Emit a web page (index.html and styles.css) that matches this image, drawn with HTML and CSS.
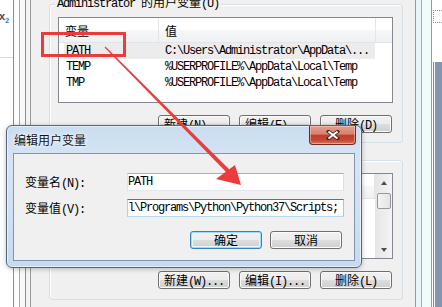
FILE: index.html
```html
<!DOCTYPE html>
<html lang="zh-CN">
<head>
  <meta charset="UTF-8">
  <title>环境变量</title>
  <link rel="stylesheet" href="styles.css">
</head>
<body>

<div class="desk">
  <div class="side-app">
    <div class="side-tool"><span class="sub-x">x<sub>2</sub></span></div>
  </div>
  <div class="frame-left"></div>

  <div class="window">
    <div class="group group-user">
      <span class="group-title"><span class="m">Administrator </span>的用户变量<span class="m">(U)</span></span>
      <div class="listbox">
        <div class="lv-head">
          <div class="lv-col c1">变量</div>
          <div class="lv-col c2">值</div>
          <div class="lv-col c3"></div>
        </div>
        <div class="lv-row sel"><span class="c1 m">PATH</span><span class="c2 m">C:\Users\Administrator\AppData\...</span></div>
        <div class="lv-row"><span class="c1 m">TEMP</span><span class="c2 m">%USERPROFILE%\AppData\Local\Temp</span></div>
        <div class="lv-row"><span class="c1 m">TMP</span><span class="c2 m">%USERPROFILE%\AppData\Local\Temp</span></div>
      </div>
      <div class="btn-row">
        <button class="btn">新建<span class="m">(N)...</span></button>
        <button class="btn">编辑<span class="m">(E)...</span></button>
        <button class="btn">删除<span class="m">(D)</span></button>
      </div>
    </div>

    <!-- system variables: title and list text sit behind the dialog -->
    <div class="group group-sys">
      <div class="listbox">
        <div class="lv-wrap">
          <div class="lv-main">
            <div class="lv-head">
              <div class="lv-col c1"></div>
              <div class="lv-col c2"></div>
            </div>
          </div>
          <div class="vscroll">
            <div class="sb-btn"><span class="tri up"></span></div>
            <div class="sb-thumb"></div>
            <div class="sb-track"></div>
            <div class="sb-btn"><span class="tri down"></span></div>
          </div>
        </div>
      </div>
      <div class="btn-row">
        <button class="btn">新建<span class="m">(W)...</span></button>
        <button class="btn">编辑<span class="m">(I)...</span></button>
        <button class="btn">删除<span class="m">(L)</span></button>
      </div>
    </div>
  </div>

  <div class="frame-right">
    <div class="fr-glass"></div>
    <div class="fr-other">
      <div class="dots"></div>
      <div class="blue-block"></div>
    </div>
  </div>
</div>

<div class="dialog">
  <div class="dlg-title">
    <span class="dlg-caption">编辑用户变量</span>
    <button class="close">
      <svg width="14" height="10" viewBox="0 0 14 10">
        <path d="M2.5 1.5 L11.5 8.5 M11.5 1.5 L2.5 8.5" stroke="#4a2420" stroke-width="3.6" stroke-linecap="square"/>
        <path d="M2.5 1.5 L11.5 8.5 M11.5 1.5 L2.5 8.5" stroke="#fff" stroke-width="2"/>
      </svg>
    </button>
  </div>
  <div class="dlg-client">
    <div class="field">
      <label>变量名<span class="m">(N):</span></label>
      <div class="input m">PATH</div>
    </div>
    <div class="field">
      <label>变量值<span class="m">(V):</span></label>
      <div class="input focus m">l\Programs\Python\Python37\Scripts;</div>
    </div>
    <div class="dlg-btns">
      <button class="btn default">确定</button>
      <button class="btn">取消</button>
    </div>
  </div>
</div>

<svg class="annot" width="442" height="307" viewBox="0 0 442 307">
  <rect x="42.5" y="33.5" width="82" height="22" fill="none" stroke="#ec3b3b" stroke-width="3"/>
  <polygon points="104.6,47.4 105.4,46.6 229.4,169.6 226.6,172.4" fill="#ec3b3b"/>
  <polygon points="241,185 216,179 235,165" fill="#ec3b3b"/>
</svg>

</body>
</html>
```

FILE: styles.css
```css
* {
  box-sizing: border-box;
}

body {
  margin: 0;
  width: 442px;
  height: 307px;
  overflow: hidden;
  position: relative;
  background: #fff;
  font-family: "Noto Sans CJK SC", "Liberation Sans", sans-serif;
  font-size: 12px;
  color: #000;
}

/* half-width latin in the 6px grid of the old UI font */
.m {
  font-family: "Liberation Mono", "Noto Sans CJK SC", monospace;
  letter-spacing: -1.2px;
}

.desk {
  display: flex;
  height: 307px;
}

/* app behind, at the far left */
.side-app {
  width: 13px;
  background: #fff;
}

.side-tool {
  height: 58px;
  border-bottom: 1px solid #d9d9d9;
  padding-top: 10px;
  font-family: "Liberation Sans", sans-serif;
  font-weight: bold;
  font-size: 11px;
  color: #4a4a4a;
  overflow: hidden;
  white-space: nowrap;
}

.sub-x {
  margin-left: -1px;
}

.sub-x sub {
  font-size: 7px;
  color: #3a6fb0;
}

.frame-left {
  width: 18px;
  background: linear-gradient(to right,
    #8d8d8d 0 1px, #fcfcfc 1px 6px,
    #a8a8a8 6px 7px, #f8f8f8 7px 12px,
    #8d8d8d 12px 13px, #f3f3f3 13px 17px,
    #9a9a9a 17px 18px);
}

/* environment variables window */
.window {
  width: 384px;
  background: #f0f0f0;
  padding: 4px 12px 0 18px;
}

.group {
  position: relative;
  border: 1px solid #d5dfe5;
  border-radius: 3px;
  box-shadow: inset 1px 1px 0 #fff;
}

.group-user {
  padding: 12px 9px 9px 8px;
}

.group-sys {
  margin-top: 17px;
  padding: 12px 9px 10px 8px;
}

.group-title {
  position: absolute;
  top: -10px;
  left: 5px;
  padding: 0 2px;
  line-height: 14px;
  background: #f0f0f0;
  white-space: nowrap;
}

.listbox {
  height: 86px;
  border: 1px solid #828790;
  background: #fff;
  overflow: hidden;
}

.lv-head {
  display: flex;
  height: 25px;
  border-bottom: 1px solid #e2e4e7;
  background: linear-gradient(#fff 0%, #fff 45%, #f5f6f7 55%, #eff1f3 100%);
}

.lv-col {
  display: flex;
  align-items: center;
  padding-left: 6px;
  border-right: 1px solid #e3e5e8;
}

.lv-col.c1 {
  width: 100px;
}

.lv-col.c2 {
  width: 217px;
}

.lv-col.c3 {
  flex: 1;
  border-right: none;
}

.lv-row {
  display: flex;
  align-items: center;
  height: 16px;
  width: 311px;
  margin-left: 5px;
  white-space: nowrap;
}

.lv-row.sel {
  background: #ececec;
}

.lv-row .c1 {
  width: 95px;
  padding-left: 2px;
}

.lv-row .c2 {
  padding-left: 6px;
}

.lv-wrap {
  display: flex;
  height: 100%;
}

.lv-main {
  flex: 1;
  overflow: hidden;
}

.vscroll {
  width: 17px;
  display: flex;
  flex-direction: column;
  border-left: 1px solid #e6e6e6;
  background: linear-gradient(to right, #e6e6e6, #f4f4f4);
}

.sb-btn {
  height: 17px;
  display: flex;
  align-items: center;
  justify-content: center;
}

.sb-track {
  flex: 1;
}

.sb-thumb {
  height: 16px;
  margin: 2px 1px 0 1px;
  border: 1px solid #979797;
  border-radius: 2px;
  background: linear-gradient(to right, #f4f4f4, #e3e3e3);
}

.tri {
  width: 0;
  height: 0;
  border-left: 3px solid transparent;
  border-right: 3px solid transparent;
}

.tri.up {
  border-bottom: 4px solid #4d4d4d;
}

.tri.down {
  border-top: 4px solid #4d4d4d;
}

.btn-row {
  display: flex;
  justify-content: flex-end;
  gap: 9px;
  margin-top: 12px;
  margin-right: 1px;
}

.btn {
  width: 72px;
  height: 18px;
  padding: 0;
  border: 1px solid #707070;
  border-radius: 3px;
  background: linear-gradient(#f2f2f2 0%, #ebebeb 50%, #dddddd 51%, #cfcfcf 100%);
  box-shadow: inset 0 0 0 1px #fbfbfb;
  font-family: "Noto Sans CJK SC", sans-serif;
  font-size: 12px;
  line-height: 16px;
  color: #000;
  white-space: nowrap;
}

.btn.default {
  border-color: #3c7fb1;
  box-shadow: inset 0 0 0 1px #9fdcf7, inset 0 0 0 2px #e2f4fc;
}

/* glass frame on the right */
.frame-right {
  flex: 1;
  display: flex;
}

.fr-glass {
  width: 18px;
  background: linear-gradient(to right,
    #8f9aa2 0 1px, #e6f5f8 1px 6px,
    #a3adb3 6px 7px, #f2fbfc 7px 16px,
    #8f9aa2 16px 17px, #fff 17px 18px);
}

.fr-other {
  flex: 1;
  display: flex;
  flex-direction: column;
  padding-top: 10px;
}

.dots {
  height: 13px;
  border: 1px dotted #8a8a8a;
  border-right: none;
}

.blue-block {
  flex: 1;
  margin-top: 39px;
  background: linear-gradient(to right, #7b8ba6 0 1px, #f4f6fa 1px 2px, #8595b0 2px);
}

/* edit dialog, floating over the window */
.dialog {
  position: absolute;
  left: 6px;
  top: 125px;
  width: 356px;
  height: 143px;
  padding: 0 6px 6px 6px;
  border: 1px solid #52657d;
  border-radius: 6px;
  background: linear-gradient(to bottom, #c9dcf1 0%, #d6e5f4 25%, #c6daef 100%);
  box-shadow: inset 0 0 0 1px rgba(255, 255, 255, 0.55), 0 1px 5px rgba(0, 0, 0, 0.25);
}

.dlg-title {
  display: flex;
  align-items: flex-start;
  height: 27px;
  padding-left: 1px;
}

.dlg-caption {
  margin-top: 7px;
  line-height: 14px;
  color: #111;
  text-shadow: 0 0 6px #fff, 0 0 3px #fff;
}

.close {
  margin-left: auto;
  margin-right: -1px;
  width: 47px;
  height: 19px;
  padding: 0;
  border: 1px solid #6d2a20;
  border-top: none;
  border-radius: 0 0 4px 4px;
  background: linear-gradient(#e3a08f 0%, #d7806d 45%, #c13e2a 52%, #c54a35 80%, #d27a62 100%);
  box-shadow: inset 0 0 0 1px rgba(255, 210, 200, 0.5);
  display: flex;
  align-items: center;
  justify-content: center;
}

.dlg-client {
  height: 108px;
  border: 1px solid #8196ad;
  background: #f0f0f0;
  padding: 19px 10px 10px 11px;
  display: flex;
  flex-direction: column;
}

.field {
  display: flex;
  align-items: center;
  height: 18px;
}

.field + .field {
  margin-top: 8px;
}

.field label {
  width: 102px;
  white-space: nowrap;
}

.input {
  width: 217px;
  height: 18px;
  border: 1px solid;
  border-color: #abadb3 #dbdfe6 #e3e9ef #e2e3ea;
  background: #fff;
  line-height: 16px;
  white-space: nowrap;
  overflow: hidden;
}

.input.focus {
  border-color: #3d7bad #a4c9e3 #b7d9ed #b5cfe7;
}

.dlg-btns {
  display: flex;
  justify-content: flex-end;
  gap: 8px;
  margin-top: 14px;
  margin-right: 2px;
}

/* red hand-drawn marks */
.annot {
  position: absolute;
  left: 0;
  top: 0;
  pointer-events: none;
}
```
